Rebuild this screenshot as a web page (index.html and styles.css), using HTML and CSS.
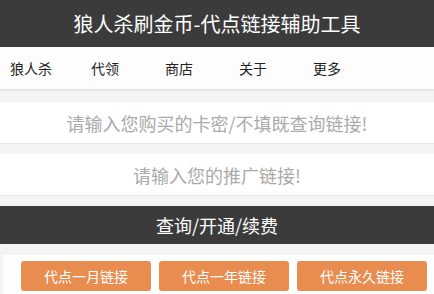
FILE: index.html
```html
<!DOCTYPE html>
<html lang="zh-CN">
<head>
<meta charset="utf-8">
<title>狼人杀刷金币-代点链接辅助工具</title>
<link rel="stylesheet" href="styles.css">
</head>
<body>
<header class="topbar">狼人杀刷金币-代点链接辅助工具</header>
<nav class="nav">
  <a class="nav-item">狼人杀</a>
  <a class="nav-item">代领</a>
  <a class="nav-item">商店</a>
  <a class="nav-item">关于</a>
  <a class="nav-item">更多</a>
</nav>
<main class="main">
  <input class="field field-first" type="text" placeholder="请输入您购买的卡密/不填既查询链接!">
  <input class="field" type="text" placeholder="请输入您的推广链接!">
  <button class="submit">查询/开通/续费</button>
  <section class="panel">
    <a class="link-btn">代点一月链接</a>
    <a class="link-btn">代点一年链接</a>
    <a class="link-btn">代点永久链接</a>
  </section>
</main>
</body>
</html>
```

FILE: styles.css
```css
html, body {
  margin: 0;
  padding: 0;
}
body {
  background: #f4f4f4;
  font-family: "Noto Sans CJK SC", "Noto Sans", sans-serif;
  overflow: hidden;
  width: 434px;
  height: 294px;
}
.topbar {
  height: 47px;
  background: #3b3b3b;
  color: #ffffff;
  font-size: 20px;
  line-height: 47px;
  text-align: center;
}
.nav {
  height: 42px;
  background: #fdfdfd;
  display: flex;
  align-items: center;
  margin: 0;
  padding-left: 0;
  box-shadow: 0 1px 2px rgba(0, 0, 0, 0.12);
}
.nav-item {
  width: 74px;
  flex: none;
  text-align: center;
  font-size: 14px;
  color: #222;
  line-height: 42px;
}
.nav-item:first-child {
  margin-left: -6px;
}
.main {
  padding-top: 13px;
  display: flex;
  flex-direction: column;
}
.field {
  display: block;
  box-sizing: border-box;
  width: 100%;
  height: 42px;
  margin: 0 0 10px 0;
  border: none;
  border-bottom: 1px solid #e6e6e6;
  background: #ffffff;
  font-family: "Noto Sans CJK SC", "Noto Sans", sans-serif;
  font-size: 18px;
  text-align: center;
  outline: none;
  padding: 0;
}
.field::placeholder {
  color: #aaaaaa;
}
.submit {
  display: block;
  width: 100%;
  height: 38px;
  border: none;
  background: #3b3b3b;
  color: #ffffff;
  font-family: "Noto Sans CJK SC", "Noto Sans", sans-serif;
  font-size: 18px;
  padding: 0;
  margin: 0;
}
.panel {
  margin: 11px 0 0 3px;
  background: #ffffff;
  padding: 6px 0 10px 18px;
  display: flex;
  gap: 8px;
}
.link-btn {
  width: 130px;
  height: 30px;
  flex: none;
  background: #e98c4f;
  color: #ffffff;
  border-radius: 3px;
  font-size: 14px;
  line-height: 30px;
  text-align: center;
}
```
